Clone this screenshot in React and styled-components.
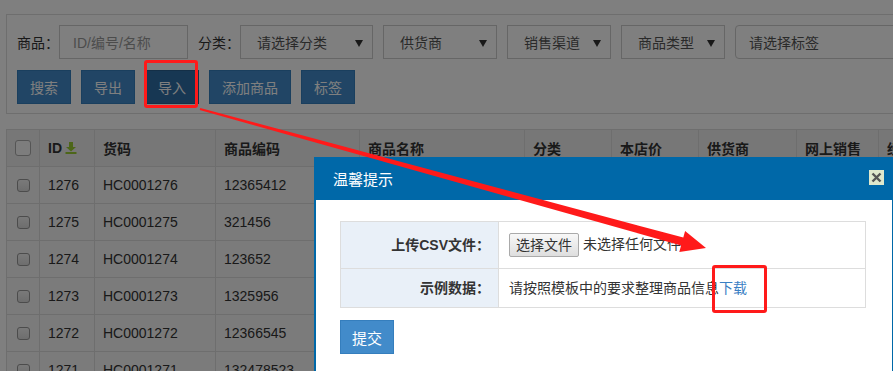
import React from "react";
import styled, { createGlobalStyle } from "styled-components";

const Global = createGlobalStyle`
  html, body { margin: 0; padding: 0; overflow: hidden; background: #fff; }
  body { font-family: "Liberation Sans", "Noto Sans CJK SC", sans-serif; font-size: 14px; color: #333; }
  * { box-sizing: border-box; }
`;

const Page = styled.div`
  width: 1200px;
  padding: 14px 6px 0;
`;

const FilterPanel = styled.div`
  border: 1px solid #ddd;
  padding: 10px 10px 9px;
  display: flex;
  flex-direction: column;
  gap: 11px;
`;

const FilterRow = styled.div`
  display: flex;
  align-items: center;
  gap: 10px;
`;

const Field = styled.div`
  display: flex;
  align-items: center;
`;

const Label = styled.span`
  font-size: 14px;
  color: #333;
  width: 42px;
  white-space: nowrap;
`;

const TextInput = styled.div`
  width: ${(p) => p.$w}px;
  height: 34px;
  border: 1px solid #ccc;
  border-radius: ${(p) => (p.$round ? 4 : 0)}px;
  display: flex;
  align-items: center;
  padding-left: 13px;
  color: ${(p) => (p.$placeholder ? "#999" : "#555")};
  font-size: 14px;
  background: #fff;
`;

const Select = styled.div`
  position: relative;
  width: ${(p) => p.$w}px;
  height: 34px;
  border: 1px solid #ccc;
  display: flex;
  align-items: center;
  padding-left: 16px;
  color: #555;
  font-size: 14px;
  background: #fff;
  &::after {
    content: "";
    position: absolute;
    right: 9px;
    top: 14px;
    border-left: 4px solid transparent;
    border-right: 4px solid transparent;
    border-top: 7px solid #333;
  }
`;

const ButtonRow = styled.div`
  display: flex;
  gap: 10px;
`;

const Btn = styled.button`
  width: ${(p) => p.$w || 54}px;
  height: 34px;
  padding: 0;
  border: 1px solid ${(p) => (p.$active ? "#285e8e" : "#357ebd")};
  background: ${(p) => (p.$active ? "#2f6ea6" : "#428bca")};
  color: #fff;
  font-family: inherit;
  font-size: 14px;
  border-radius: 0;
`;

const Table = styled.table`
  margin-top: 15px;
  border-collapse: collapse;
  table-layout: fixed;
  width: 1090px;
`;

const Th = styled.th`
  height: 37px;
  border: 1px solid #ddd;
  background: #eeeeee;
  text-align: left;
  padding: 0 8px;
  font-weight: bold;
  font-size: 14px;
  color: #333;
  white-space: nowrap;
  overflow: hidden;
`;

const Td = styled.td`
  height: 37px;
  border: 1px solid #ddd;
  background: #f6f6f6;
  padding: 0 8px;
  font-size: 14px;
  color: #333;
  white-space: nowrap;
  overflow: hidden;
`;

const HeadCheck = styled.span`
  display: block;
  width: 16px;
  height: 16px;
  border: 1px solid #aaa;
  border-radius: 3px;
  background: #fafafa;
`;

const RowCheck = styled.span`
  display: block;
  width: 13px;
  height: 13px;
  border: 1px solid #999;
  border-radius: 3px;
  background: linear-gradient(#f4f4f4, #dcdcdc);
  margin-left: 2px;
`;

const HeadInner = styled.span`
  display: inline-flex;
  align-items: center;
  gap: 3px;
`;

const Overlay = styled.div`
  position: fixed;
  inset: 0;
  background: rgba(0, 0, 0, 0.5);
`;

const Dialog = styled.div`
  position: fixed;
  left: 314px;
  top: 157px;
  width: 580px;
  border: 2px solid #0068a8;
  border-top: 0;
  background: #fff;
`;

const TitleBar = styled.div`
  height: 43px;
  background: #0068a8;
  display: flex;
  align-items: center;
  justify-content: space-between;
  padding: 0 8px 0 17px;
  color: #fff;
  font-size: 15px;
`;

const CloseBtn = styled.span`
  width: 15px;
  height: 15px;
  background: #dfe8cc;
  display: flex;
  align-items: center;
  justify-content: center;
  margin-top: -2px;
`;

const DialogBody = styled.div`
  padding: 21px 24px 40px;
  min-height: 220px;
`;

const FormTable = styled.table`
  width: 526px;
  border-collapse: collapse;
  table-layout: fixed;
`;

const FormLabel = styled.td`
  width: 158px;
  background: #e9f0f8;
  border: 1px solid #ddd;
  text-align: right;
  padding: ${(p) => (p.$tall ? "11px" : "10px")} 8px;
  line-height: 18px;
  font-weight: bold;
  font-size: 14px;
  color: #333;
`;

const FormValue = styled.td`
  border: 1px solid #ddd;
  padding: ${(p) => (p.$tall ? "11px" : "10px")} 10px;
  line-height: 18px;
  font-size: 14px;
  color: #333;
  white-space: nowrap;
`;

const FileBtn = styled.span`
  display: inline-block;
  height: 24px;
  line-height: 22px;
  padding: 0 6px;
  border: 1px solid #aaa;
  border-radius: 2px;
  background: linear-gradient(#f8f8f8, #dedede);
  margin-right: 4px;
  vertical-align: middle;
`;

const Link = styled.a`
  color: #3a80c4;
  text-decoration: none;
`;

const Submit = styled.button`
  margin-top: 12px;
  width: 54px;
  height: 34px;
  border: 1px solid #357ebd;
  background: #428bca;
  color: #fff;
  font-family: inherit;
  font-size: 15px;
  border-radius: 0;
`;

const Annotation = styled.div`
  position: fixed;
  left: ${(p) => p.$x}px;
  top: ${(p) => p.$y}px;
  width: ${(p) => p.$w}px;
  height: ${(p) => p.$h}px;
  border: 3px solid #ff1a1a;
  border-radius: 3px;
  pointer-events: none;
`;

const ArrowLayer = styled.svg`
  position: fixed;
  left: 0;
  top: 0;
  pointer-events: none;
`;

const rows = [
  ["1276", "HC0001276", "12365412"],
  ["1275", "HC0001275", "321456"],
  ["1274", "HC0001274", "123652"],
  ["1273", "HC0001273", "1325956"],
  ["1272", "HC0001272", "12366545"],
  ["1271", "HC0001271", "132478523"],
];

const cols = [33, 55, 121, 144, 165, 87, 87, 98, 82, 218];

export default function App() {
  return (
    <>
      <Global />
      <Page>
        <FilterPanel>
          <FilterRow>
            <Field>
              <Label>商品：</Label>
              <TextInput $w={129} $placeholder>ID/编号/名称</TextInput>
            </Field>
            <Field>
              <Label>分类：</Label>
              <Select $w={133}>请选择分类</Select>
            </Field>
            <Select $w={114}>供货商</Select>
            <Select $w={104}>销售渠道</Select>
            <Select $w={104}>商品类型</Select>
            <TextInput $w={240} $round>请选择标签</TextInput>
          </FilterRow>
          <ButtonRow>
            <Btn>搜索</Btn>
            <Btn>导出</Btn>
            <Btn $active>导入</Btn>
            <Btn $w={82}>添加商品</Btn>
            <Btn>标签</Btn>
          </ButtonRow>
        </FilterPanel>

        <Table>
          <colgroup>
            {cols.map((w, i) => (
              <col key={i} width={w} />
            ))}
          </colgroup>
          <thead>
            <tr>
              <Th><HeadCheck /></Th>
              <Th>
                <HeadInner>
                  ID
                  <svg width="12" height="12" viewBox="0 0 12 12">
                    <path d="M4 0h4v5h3L6 9.5 1 5h3z" fill="#9acd32" />
                    <rect x="0.5" y="10" width="11" height="2" fill="#9acd32" />
                  </svg>
                </HeadInner>
              </Th>
              <Th>货码</Th>
              <Th>商品编码</Th>
              <Th>商品名称</Th>
              <Th>分类</Th>
              <Th>本店价</Th>
              <Th>供货商</Th>
              <Th>网上销售</Th>
              <Th>经营状态</Th>
            </tr>
          </thead>
          <tbody>
            {rows.map((r) => (
              <tr key={r[0]}>
                <Td><RowCheck /></Td>
                <Td>{r[0]}</Td>
                <Td>{r[1]}</Td>
                <Td>{r[2]}</Td>
                <Td />
                <Td />
                <Td />
                <Td />
                <Td />
                <Td />
              </tr>
            ))}
          </tbody>
        </Table>
      </Page>

      <Overlay />

      <Dialog>
        <TitleBar>
          <span>温馨提示</span>
          <CloseBtn>
            <svg width="11" height="11" viewBox="0 0 11 11">
              <path d="M1.5 1.5L9.5 9.5M9.5 1.5L1.5 9.5" stroke="#555" strokeWidth="2.4" />
            </svg>
          </CloseBtn>
        </TitleBar>
        <DialogBody>
          <FormTable>
            <tbody>
              <tr>
                <FormLabel $tall>上传CSV文件：</FormLabel>
                <FormValue $tall>
                  <FileBtn>选择文件</FileBtn>未选择任何文件
                </FormValue>
              </tr>
              <tr>
                <FormLabel>示例数据：</FormLabel>
                <FormValue>
                  请按照模板中的要求整理商品信息<Link href="#">下载</Link>
                </FormValue>
              </tr>
            </tbody>
          </FormTable>
          <Submit>提交</Submit>
        </DialogBody>
      </Dialog>

      <Annotation $x={144} $y={60} $w={54} $h={48} />
      <Annotation $x={712} $y={265} $w={55} $h={48} />
      <ArrowLayer width="893" height="371" viewBox="0 0 893 371">
        <polygon
          points="199.7,110 681.1,245.4 679.3,252.1 706,248 685.1,230.9 683.3,237.6 200.3,108"
          fill="#ff1a1a"
        />
      </ArrowLayer>
    </>
  );
}
